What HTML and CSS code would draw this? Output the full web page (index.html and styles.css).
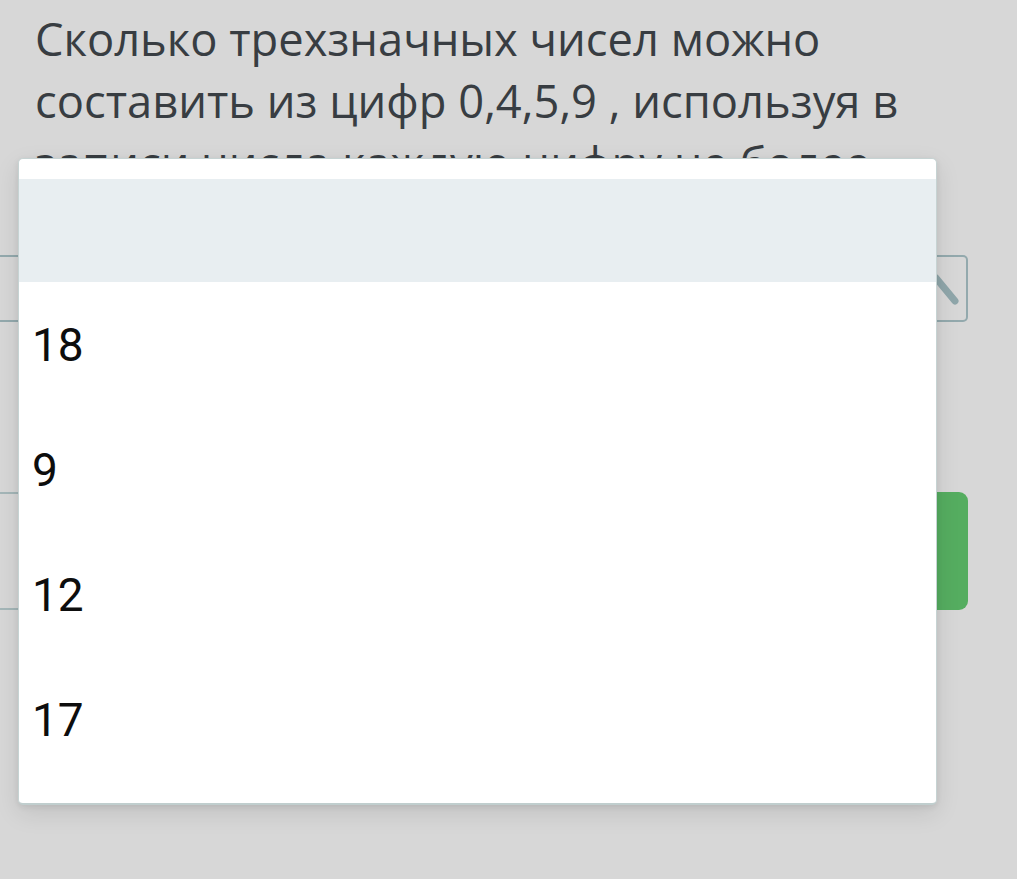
FILE: index.html
```html
<!DOCTYPE html>
<html lang="ru">
<head>
    <meta charset="UTF-8">
    <meta name="viewport" content="width=device-width, initial-scale=1.0">
    <title>Вопрос</title>
    <link rel="stylesheet" href="styles.css">
</head>
<body>

    <div class="page">
        <p class="question">Сколько трехзначных чисел можно составить из цифр 0,4,5,9 , используя в записи числа каждую цифру не более одного раза?</p>

        <!-- Поле ответа -->
        <div class="field">
            <svg class="edit-icon" width="40" height="50" viewBox="0 0 40 50">
                <path d="M10 21 L29 44" stroke="#8fa6aa" stroke-width="7" stroke-linecap="round" fill="none"/>
            </svg>
        </div>

        <!-- Ряд с кнопкой -->
        <div class="answer-row">
            <div class="answer-box"></div>
            <button class="send">Ответить</button>
        </div>
    </div>

    <!-- Выпадающий список -->
    <div class="dropdown">
        <div class="option selected"></div>
        <div class="option">18</div>
        <div class="option">9</div>
        <div class="option">12</div>
        <div class="option">17</div>
    </div>

</body>
</html>
```

FILE: styles.css
```css
/* Основа */
body {
    margin: 0;
    background: #d7d7d7;
    font-family: 'Open Sans', sans-serif;
    overflow: hidden;
}

.page {
    padding: 8px 49px 0 0;
}

/* Вопрос */
.question {
    margin: 0 0 0 35px;
    font-size: 45.3px;
    line-height: 62px;
    color: #383d42;
}

/* Поле */
.field {
    margin-top: -1px;
    height: 63px;
    border: 2px solid #93a9ad;
    border-left: none;
    border-radius: 0 5px 5px 0;
    display: flex;
    justify-content: flex-end;
    align-items: flex-start;
}

/* Ряд с кнопкой */
.answer-row {
    margin-top: 170px;
    display: flex;
    height: 118px;
}

.answer-box {
    flex: 1;
    border-top: 2px solid #a4b6b8;
    border-bottom: 2px solid #a4b6b8;
}

.send {
    width: 220px;
    border: none;
    border-radius: 0 9px 9px 0;
    background: #55ad60;
    color: white;
    font-family: 'Open Sans', sans-serif;
    font-size: 30px;
}

/* Список */
.dropdown {
    position: absolute;
    left: 18px;
    top: 158px;
    width: 917px;
    padding: 20px 0 21px;
    background: white;
    border: 1px solid #c6d3d3;
    border-bottom: 2px solid #c0cece;
    border-radius: 5px;
    box-shadow: 0 8px 24px rgba(0, 0, 0, 0.1), 0 2px 6px rgba(0, 0, 0, 0.08);
}

.option {
    height: 125px;
    display: flex;
    align-items: center;
    padding-left: 13px;
    font-family: Roboto, sans-serif;
    font-size: 46px;
    color: #0d0d0d;
}

.option.selected {
    height: 103px;
    background: #e8eef1;
}
```
